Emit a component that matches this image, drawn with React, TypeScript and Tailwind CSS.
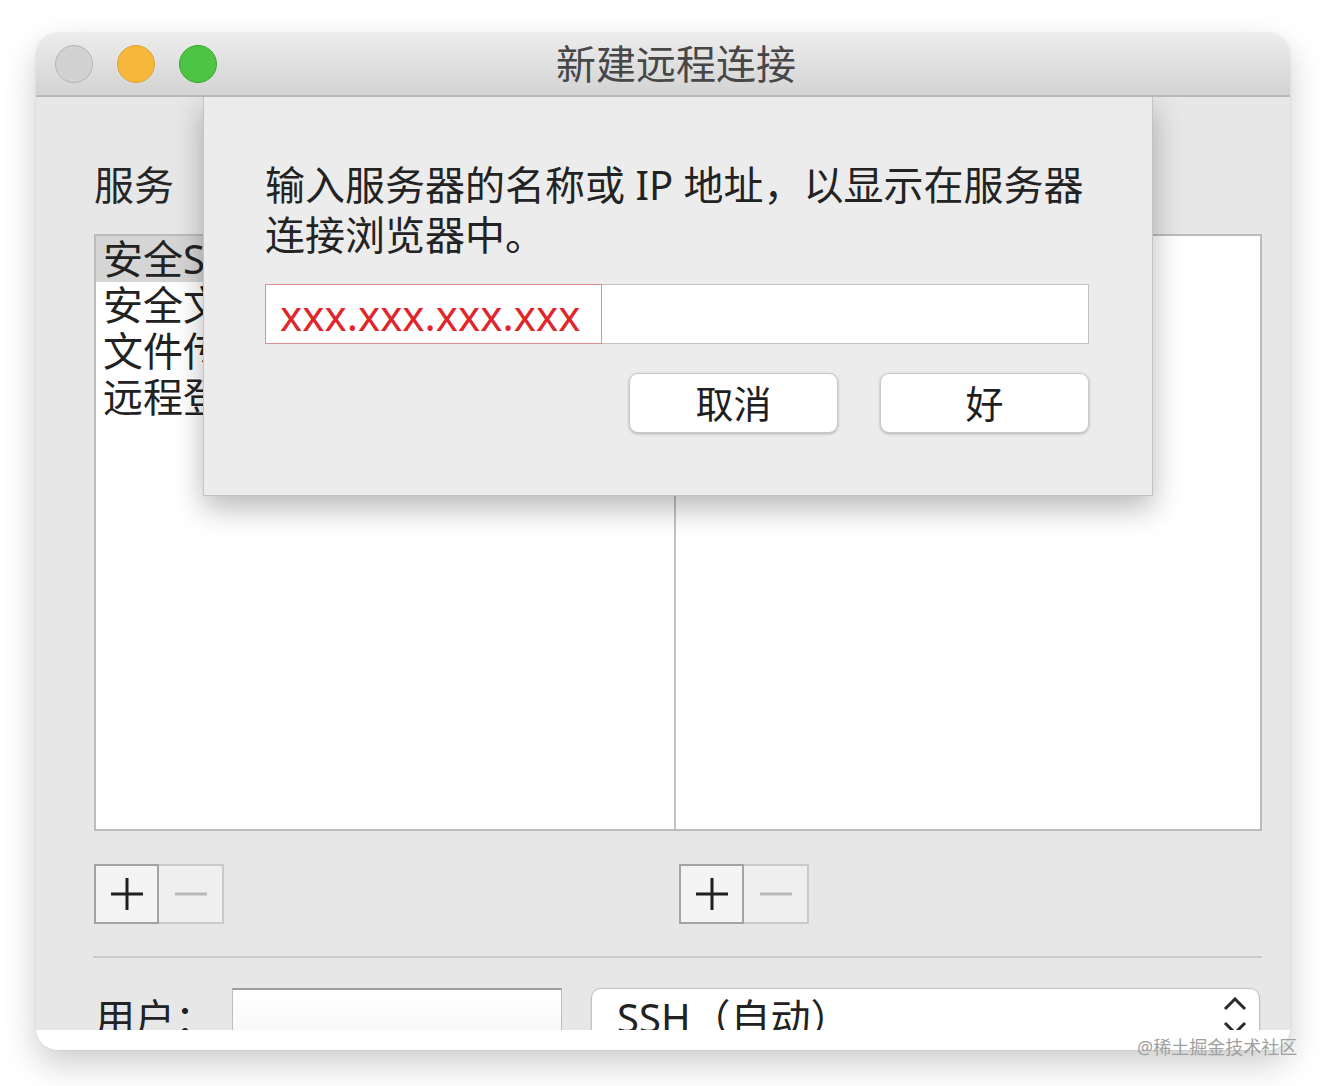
import React from 'react'

const font = { fontFamily: '"Noto Sans", "Noto Sans CJK SC", sans-serif' }

const services = ['安全Shell (ssh)', '安全文件传输 (sftp)', '文件传输 (ftp)', '远程登录 (telnet)']

const PlusMinus = () => (
  <div className="flex h-[60px] w-[130px]">
    <div className="flex w-[65px] items-center justify-center border-2 border-[#a3a3a3] bg-[#f4f4f4]">
      <svg width="36" height="36" viewBox="0 0 36 36">
        <path d="M2 18H34M18 2V34" stroke="#1f1f1f" strokeWidth="3" />
      </svg>
    </div>
    <div className="flex w-[65px] items-center justify-center border-2 border-l-0 border-[#cacaca] bg-[#efefef]">
      <svg width="36" height="36" viewBox="0 0 36 36">
        <path d="M2 18H34" stroke="#b8b8b8" strokeWidth="3" />
      </svg>
    </div>
  </div>
)

const Light = ({ fill, ring }: { fill: string; ring: string }) => (
  <div className={`h-[38px] w-[38px] rounded-full border ${fill} ${ring}`} />
)

export default function App() {
  return (
    <div className="relative h-[1086px] w-[1326px] overflow-hidden bg-white pl-[36px] pt-[33px]" style={font}>
      <div className="flex h-[1017px] w-[1254px] flex-col overflow-hidden rounded-[22px] bg-white shadow-[0_14px_34px_rgba(0,0,0,0.2),0_0_2px_rgba(0,0,0,0.15)]">
        {/* title bar */}
        <div className="flex h-[64px] shrink-0 items-center border-b-2 border-[#b8b8b8] bg-gradient-to-b from-[#ededed] to-[#d3d3d3]">
          <div className="flex w-[181px] gap-[24px] pl-[19px]">
            <Light fill="bg-[#d2d2d2]" ring="border-[#b4b4b4]" />
            <Light fill="bg-[#f6b73a]" ring="border-[#dda12c]" />
            <Light fill="bg-[#4dc443]" ring="border-[#37a632]" />
          </div>
          <div className="flex-1 text-center text-[40px] leading-[50px] text-[#474747]">新建远程连接</div>
          <div className="w-[155px]" />
        </div>

        {/* content */}
        <div className="relative h-[933px] shrink-0 overflow-hidden bg-[#e7e7e7] pl-[58px]">
          <div className="mt-[65px] text-[40px] leading-[46px] text-[#262626]">服务</div>

          <div className="mt-[26px] flex h-[597px] w-[1168px] border-2 border-[#bcbcbc] bg-white">
            <div className="w-[580px] border-r-2 border-[#c4c4c4] text-[40px] leading-[46px] text-[#222]">
              {services.map((s, i) => (
                <div key={s} className={`h-[46px] whitespace-nowrap pl-[7px] ${i === 0 ? 'bg-[#d5d5d5]' : ''}`}>
                  {s}
                </div>
              ))}
            </div>
            <div className="flex-1" />
          </div>

          <div className="mt-[33px] flex">
            <div className="w-[585px]">
              <PlusMinus />
            </div>
            <PlusMinus />
          </div>

          <div className="mt-[32px] h-[2px] w-[1169px] -translate-x-px bg-[#cbcbcb]" />

          <div className="mt-[30px] flex items-start text-[40px] text-[#222]">
            <div className="w-[138px] pl-[1px] leading-[60px]">用户：</div>
            <div className="h-[60px] w-[330px] border border-t-2 border-[#bdbdbd] border-t-[#9c9c9c] bg-gradient-to-b from-white to-[#f6f6f6]" />
            <div className="ml-[29px] flex h-[60px] w-[669px] items-start justify-between rounded-[10px] border border-[#c2c2c2] bg-white pl-[25px] pr-[11px] shadow-[0_1px_2px_rgba(0,0,0,0.15)]">
              <span className="leading-[58px]">SSH（自动）</span>
              <svg width="26" height="48" viewBox="0 0 26 48" className="mt-[8px]">
                <path d="M3 12L13 2L23 12M3 26L13 36L23 26" stroke="#2a2a2a" strokeWidth="3" fill="none" />
              </svg>
            </div>
          </div>

          {/* sheet */}
          <div className="absolute left-[167px] top-0 h-[399px] w-[950px] border border-t-0 border-[#c3c3c3] bg-[#ececec] pl-[61px] pt-[63px] shadow-[0_12px_28px_rgba(0,0,0,0.28)]">
            <div className="whitespace-nowrap text-[40px] leading-[50px] text-[#232323]">
              输入服务器的名称或 IP 地址，以显示在服务器
              <br />
              连接浏览器中。
            </div>
            <div className="mt-[24px] flex h-[60px] w-[824px]">
              <div className="flex w-[337px] items-center border border-[#df8d8d] bg-white pl-[14px] text-[42px] text-[#e0262b]">
                xxx.xxx.xxx.xxx
              </div>
              <div className="flex-1 border border-l-0 border-[#c2c2c2] bg-white" />
            </div>
            <div className="mt-[29px] flex w-[824px] justify-end gap-[42px]">
              <div className="flex h-[60px] w-[209px] items-center justify-center rounded-[9px] border border-[#c9c9c9] bg-white text-[38px] text-[#1f1f1f] shadow-[0_1px_3px_rgba(0,0,0,0.25)]">
                取消
              </div>
              <div className="flex h-[60px] w-[209px] items-center justify-center rounded-[9px] border border-[#c9c9c9] bg-white text-[38px] text-[#1f1f1f] shadow-[0_1px_3px_rgba(0,0,0,0.25)]">
                好
              </div>
            </div>
          </div>
        </div>
        <div className="flex-1 bg-white" />
      </div>

      <div className="absolute left-[1137px] top-[1035px] text-[18px] leading-[24px] text-[#a0a0a0]">@稀土掘金技术社区</div>
    </div>
  )
}
